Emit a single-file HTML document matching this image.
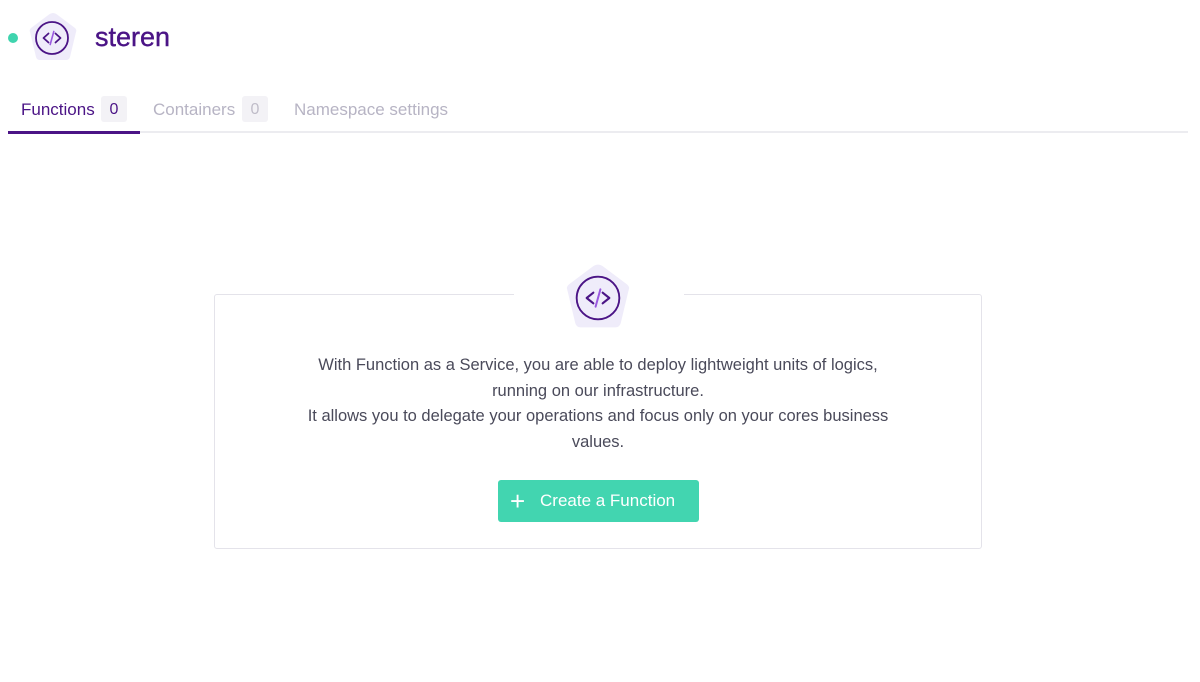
<!DOCTYPE html>
<html><head><style>
body{margin:0;width:1200px;height:682px;background:#fff;font-family:"Liberation Sans",sans-serif;position:relative;overflow:hidden}
.a{position:absolute}
</style></head><body>
<div class="a" style="left:8px;top:33px;width:10px;height:10px;border-radius:50%;background:#3fd4ae"></div>
<svg class="a" style="left:26px;top:11px" width="54" height="54" viewBox="0 0 54 54">
<path d="M27 2 Q29 2 31 3.5 L49 17 Q51 19 50 21 L44 46 Q43 49 40 49 L14 49 Q11 49 10 46 L4 21 Q3 19 5 17 L23 3.5 Q25 2 27 2Z" fill="#efecfa"/>
<circle cx="26" cy="27" r="16" fill="none" stroke="#4b1486" stroke-width="1.8"/>
<path d="M22.5 22.5L17.5 27L22.5 31.5M29.5 22.5L34.5 27L29.5 31.5" stroke="#4b1486" stroke-width="1.8" fill="none" stroke-linecap="round" stroke-linejoin="round"/>
<path d="M27.8 20.5l-3.6 13" stroke="#9b59e0" stroke-width="1.6" stroke-linecap="round"/>
</svg>
<div class="a" style="left:95px;top:22px;font-size:27px;color:#4b1486;-webkit-text-stroke:0.4px #4b1486">steren</div>
<div class="a" style="left:21px;top:100px;font-size:17px;color:#4b1486">Functions</div>
<div class="a" style="left:101px;top:96px;width:26px;height:26px;background:#f3f2f6;border-radius:3px;color:#4b1486;font-size:16px;text-align:center;line-height:28px">0</div>
<div class="a" style="left:153px;top:100px;font-size:17px;color:#b7b4c4">Containers</div>
<div class="a" style="left:242px;top:96px;width:26px;height:26px;background:#f3f2f6;border-radius:3px;color:#c0bdc9;font-size:16px;text-align:center;line-height:28px">0</div>
<div class="a" style="left:294px;top:100px;font-size:17px;color:#b7b4c4">Namespace settings</div>
<div class="a" style="left:8px;top:131px;width:1180px;height:2px;background:#ececf0"></div>
<div class="a" style="left:8px;top:131px;width:132px;height:3px;background:#4b1486"></div>
<div class="a" style="left:214px;top:294px;width:766px;height:253px;border:1px solid #e4e3ea;border-radius:3px"></div>
<div class="a" style="left:514px;top:290px;width:170px;height:10px;background:#fff"></div>
<svg class="a" style="left:561px;top:262px" width="74" height="72" viewBox="0 0 54 54">
<path d="M27 2 Q29 2 31 3.5 L49 17 Q51 19 50 21 L44 46 Q43 49 40 49 L14 49 Q11 49 10 46 L4 21 Q3 19 5 17 L23 3.5 Q25 2 27 2Z" fill="#efecfa"/>
<circle cx="27" cy="27" r="16" fill="none" stroke="#4b1486" stroke-width="1.4"/>
<path d="M23.5 23L18.5 27L23.5 31M30.5 23L35.5 27L30.5 31" stroke="#4b1486" stroke-width="1.6" fill="none" stroke-linecap="round" stroke-linejoin="round"/>
<path d="M28.8 20.5l-3.6 13" stroke="#9b59e0" stroke-width="1.5" stroke-linecap="round"/>
</svg>
<div class="a" style="left:214px;top:353px;width:768px;text-align:center;font-size:16.5px;line-height:25.5px;color:#4a4a5a">With Function as a Service, you are able to deploy lightweight units of logics,<br>running on our infrastructure.<br>It allows you to delegate your operations and focus only on your cores business<br>values.</div>
<div class="a" style="left:498px;top:480px;width:201px;height:42px;background:#42d5b0;border-radius:3px;color:#fff;font-size:17px;line-height:42px"><span style="position:absolute;left:12px;font-size:26px;font-weight:300">+</span><span style="position:absolute;left:42px">Create a Function</span></div>
</body></html>
